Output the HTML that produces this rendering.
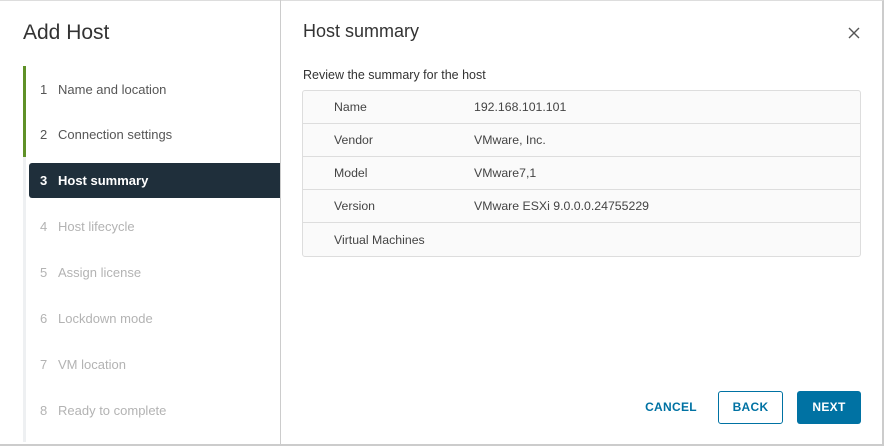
<!DOCTYPE html>
<html><head><style>
*{box-sizing:border-box;margin:0;padding:0}
body{width:884px;height:446px;background:#fff;font-family:"Liberation Sans",sans-serif;position:relative;overflow:hidden;color:#333}
.frame{position:absolute;left:0;top:0;width:884px;height:446px;border-top:1px solid #ddd;border-right:2px solid #ccc;border-bottom:2px solid #ccc}
.left{position:absolute;left:0;top:0;width:281px;height:446px;border-right:1px solid #ccc}
h1{position:absolute;left:23px;top:21px;font-size:21px;font-weight:normal;color:#333}
.bar{position:absolute;left:23px;width:3px}
.step{position:absolute;left:29px;width:251px;height:35px;line-height:35px;font-size:13px;color:#565656;padding-left:11px}
.step span{display:inline-block;width:18px}
.step.dis{color:#b3b3b3}
.step.act{background:#1f2f3b;color:#fff;font-weight:bold;border-radius:3px 0 0 3px}
h2{position:absolute;left:303px;top:21px;font-size:18px;font-weight:normal;color:#333}
.sub{position:absolute;left:303px;top:68px;font-size:12.5px;color:#333}
table{position:absolute;left:302px;top:90px;width:559px;border-collapse:separate;border-spacing:0;border:1px solid #ddd;border-radius:3px;background:#fafafa}
td{height:33px;font-size:12.3px;color:#444;border-bottom:1px solid #ddd}
tr:last-child td{border-bottom:none}
td.l{padding-left:31px;width:171px}
.btn{position:absolute;top:391px;height:33px;line-height:33px;text-align:center;font-size:12px;font-weight:bold;border-radius:3px;letter-spacing:.3px}
</style></head><body>
<div class="frame"></div>
<div class="left">
<h1>Add Host</h1>
<div class="bar" style="top:66px;height:91px;background:#5f9127"></div>
<div class="bar" style="top:157px;height:285px;background:#eef0f2"></div>
<div class="step" style="top:72px"><span>1</span>Name and location</div>
<div class="step" style="top:117px"><span>2</span>Connection settings</div>
<div class="step act" style="top:163px"><span>3</span>Host summary</div>
<div class="step dis" style="top:209px"><span>4</span>Host lifecycle</div>
<div class="step dis" style="top:255px"><span>5</span>Assign license</div>
<div class="step dis" style="top:301px"><span>6</span>Lockdown mode</div>
<div class="step dis" style="top:347px"><span>7</span>VM location</div>
<div class="step dis" style="top:393px"><span>8</span>Ready to complete</div>
</div>
<h2>Host summary</h2>
<svg style="position:absolute;left:848px;top:27px" width="12" height="12"><path d="M1 1L11 11M11 1L1 11" stroke="#555" stroke-width="1.4"/></svg>
<div class="sub">Review the summary for the host</div>
<table>
<tr><td class="l">Name</td><td>192.168.101.101</td></tr>
<tr><td class="l">Vendor</td><td>VMware, Inc.</td></tr>
<tr><td class="l">Model</td><td>VMware7,1</td></tr>
<tr><td class="l">Version</td><td>VMware ESXi 9.0.0.0.24755229</td></tr>
<tr><td class="l">Virtual Machines</td><td></td></tr>
</table>
<div class="btn" style="left:640px;width:62px;color:#0072a3">CANCEL</div>
<div class="btn" style="left:718px;width:65px;border:1px solid #0072a3;color:#0072a3;line-height:31px">BACK</div>
<div class="btn" style="left:797px;width:64px;background:#0072a3;color:#fff">NEXT</div>
</body></html>
